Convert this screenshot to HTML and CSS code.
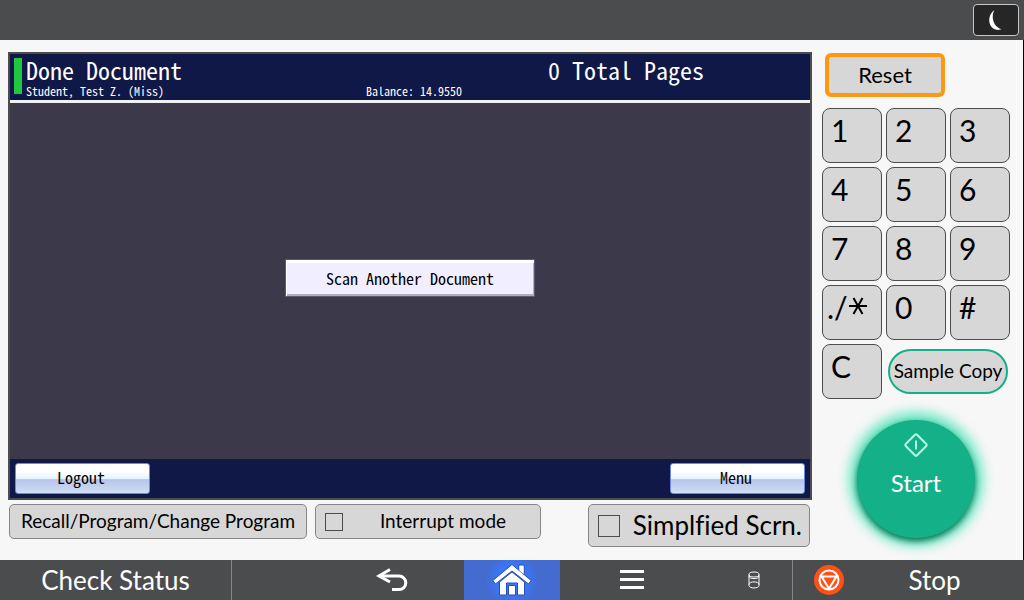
FILE: index.html
```
<!DOCTYPE html>
<html lang="en">
<head>
    <meta charset="UTF-8">
    <meta name="viewport" content="width=device-width, initial-scale=1.0">
    <title>Done Document</title>
    <link rel="stylesheet" href="styles.css">
</head>
<body>
    <header class="topbar">
        <button type="button" class="sleep" aria-label="Sleep">
            <svg width="16" height="24" viewBox="0 0 16 24">
                <path d="M6.500 2C-1.500 7-.5 21.500 10 22l3.500-.8C5.500 19 2.500 9 6.500 2z" fill="#fff"/>
            </svg>
        </button>
    </header>

    <main class="main">
        <div class="left">
            <section class="screen">
                <div class="screen-header">
                    <div class="marker"></div>
                    <div class="info">
                        <h1>Done Document</h1>
                        <p>Student, Test Z. (Miss)</p>
                    </div>
                    <p class="balance">Balance: 14.9550</p>
                    <p class="pages">0 Total Pages</p>
                </div>
                <div class="screen-body">
                    <button type="button" class="scan">Scan Another Document</button>
                </div>
                <div class="screen-footer">
                    <button type="button" class="glossy">Logout</button>
                    <button type="button" class="glossy">Menu</button>
                </div>
            </section>
            <div class="options">
                <button type="button" class="option recall">Recall/Program/Change Program</button>
                <label class="option interrupt"><input type="checkbox"><span>Interrupt mode</span></label>
                <label class="option simple"><input type="checkbox"><span>Simplfied Scrn.</span></label>
            </div>
        </div>

        <aside class="right">
            <button type="button" class="reset">Reset</button>
            <div class="keypad">
                <button type="button">1</button>
                <button type="button">2</button>
                <button type="button">3</button>
                <button type="button">4</button>
                <button type="button">5</button>
                <button type="button">6</button>
                <button type="button">7</button>
                <button type="button">8</button>
                <button type="button">9</button>
                <button type="button" class="star">./<svg width="20" height="20" viewBox="0 0 20 20" aria-label="*">
                    <path d="M1 10h18M5.500 2l9 16M14.500 2l-9 16" stroke="#000" stroke-width="2"/>
                </svg></button>
                <button type="button">0</button>
                <button type="button">#</button>
                <button type="button">C</button>
                <button type="button" class="sample">Sample Copy</button>
            </div>
            <button type="button" class="start">
                <svg width="26" height="26" viewBox="0 0 26 26" fill="none" stroke="#b4fbe6" stroke-width="2">
                    <rect x="5" y="5" width="16" height="16" rx="1.500" transform="rotate(45 13 13)"/>
                    <path d="M13 8.500v9"/>
                </svg>
                <span>Start</span>
            </button>
        </aside>
    </main>

    <nav class="navbar">
        <button type="button" class="status">Check Status</button>
        <button type="button" class="back" aria-label="Back">
            <svg width="34" height="26" viewBox="0 0 34 26" fill="none" stroke="#fff" stroke-width="3">
                <path d="M5 9h19a6.800 6.800 0 0 1 0 13.600H17"/>
                <path d="M15 2.500L4 9l11 6"/>
            </svg>
        </button>
        <button type="button" class="home" aria-label="Home">
            <svg width="40" height="34" viewBox="0 0 40 34" fill="#fff" stroke="#2550b0">
                <path d="M27 2h5v10h-5z"/>
                <path d="M20 1.500L.8 17.500l2.700 3.500L20 8l16.500 13 2.700-3.500z"/>
                <path d="M27.500 3h4v8l-4-3.500z" stroke="none"/>
                <path d="M20 9L7.500 19v13h7v-12h11v12h7V19z"/>
                <path d="M16.500 22.500h7v9.500h-7z"/>
            </svg>
        </button>
        <button type="button" class="menu" aria-label="Menu">
            <svg width="24" height="20" viewBox="0 0 24 20">
                <path d="M0 0h24v3H0zM0 8h24v3H0zM0 16h24v3H0z" fill="#fff"/>
            </svg>
        </button>
        <div class="storage">
            <svg width="12" height="18" viewBox="0 0 12 18" fill="none" stroke="#fff">
                <ellipse cx="6" cy="3.500" rx="5" ry="2.500"/>
                <path d="M1 3.500v11c0 3.300 10 3.300 10 0v-11M1 5c0 3.500 10 3.500 10 0M1 13.500c0-3.500 10-3.500 10 0"/>
            </svg>
        </div>
        <button type="button" class="stop">
            <svg width="32" height="32" viewBox="0 0 32 32" fill="none" stroke="#fff">
                <circle cx="16" cy="16" r="15" fill="#ff5015" stroke="none"/>
                <circle cx="16" cy="16" r="9.500" stroke-width="2"/>
                <path d="M8.500 12.500h15L16 24.500z" stroke-width="2"/>
            </svg>
            <span>Stop</span>
        </button>
    </nav>
</body>
</html>
```
FILE: styles.css
```
* {
    box-sizing: border-box;
}
body {
    margin: 0;
    min-height: 100vh;
    display: flex;
    flex-direction: column;
    font-family: Lato, "Noto Sans", sans-serif;
    font-variant-ligatures: none;
    background-color: #f7f7f7;
    color: #000;
}
h1, p {
    margin: 0;
    font-weight: normal;
}
button {
    font-family: inherit;
    color: inherit;
    padding: 0;
    border: none;
    cursor: pointer;
}
svg {
    display: block;
}

/* top bar */
.topbar {
    display: flex;
    justify-content: flex-end;
    align-items: center;
    height: 40px;
    padding: 0 5px;
    background-color: #4b4c4d;
}
.sleep {
    display: flex;
    align-items: center;
    justify-content: center;
    width: 46px;
    height: 32px;
    background-color: #262626;
    border: 1px solid #c8c8c8;
    border-radius: 4px;
}

/* main area */
.main {
    flex: 1;
    display: flex;
    gap: 10px;
    padding: 12px 13px 12px 8px;
    border-right: 1px solid #000;
}
.left {
    flex: 1;
    display: flex;
    flex-direction: column;
}
.screen {
    flex: 1;
    display: flex;
    flex-direction: column;
    border: 2px solid #4b4c4d;
    background-color: #3c394a;
    color: #fff;
    font-family: "Noto Sans Mono CJK JP", "Noto Sans CJK JP", monospace;
    font-feature-settings: "hwid";
}
.screen-header {
    display: grid;
    grid-template-columns: 8px 336px 1fr 258px;
    column-gap: 4px;
    height: 49px;
    padding: 4px 4px 0;
    background-color: #101848;
    border-bottom: 3px solid #f2f2f2;
}
.marker {
    height: 36px;
    background-color: #20c840;
}
.screen h1, .pages {
    font-size: 24px;
    line-height: 24px;
}
.info p, .balance {
    padding-top: 3px;
    font-size: 12px;
    line-height: 12px;
}
.screen-header .balance {
    padding-top: 27px;
}
.screen-body {
    flex: 1;
    display: flex;
    align-items: center;
    justify-content: center;
    padding-bottom: 6px;
}
.scan {
    width: 250px;
    height: 38px;
    background-color: #f0eeff;
    color: #000;
    border: 1px solid #5c5a70;
    box-shadow: inset 0 3px #fff, inset 1px 0 #fff, inset -1px -2px #b0afb8;
    font-size: 16px;
    font-feature-settings: inherit;
}
.screen-footer {
    display: flex;
    justify-content: space-between;
    align-items: center;
    height: 39px;
    padding: 0 5px;
    background-color: #101848;
}
.glossy {
    width: 135px;
    height: 31px;
    padding: 0 3px 4px 0;
    color: #000;
    border: 1px solid #7088e0;
    border-radius: 3px;
    background: linear-gradient(#fff 0%, #fff 25%, #e4f4ff 50%, #b8c4ea 54%, #c8d8f2 90%, #d4e4fa 100%);
    font-size: 16px;
    font-feature-settings: inherit;
}

/* buttons under the screen */
.options {
    display: flex;
    align-items: flex-start;
    height: 48px;
    gap: 8px;
    padding: 4px 2px 0 1px;
}
.option {
    display: flex;
    align-items: center;
    justify-content: center;
    height: 35px;
    background-color: #d7d7d7;
    border: 1px solid #858585;
    border-radius: 5px;
    font-size: 19px;
    line-height: 32px;
    white-space: nowrap;
    cursor: pointer;
}
.option input {
    appearance: none;
    flex: none;
    width: 18px;
    height: 18px;
    margin: 0;
    border: 1px solid #4b4c4d;
}
.option span {
    flex: 1;
    padding-bottom: 2px;
    text-align: center;
}
.recall {
    width: 298px;
    padding-bottom: 2px;
}
.interrupt {
    width: 226px;
    padding: 0 9px;
}
.interrupt span {
    padding-left: 12px;
}
.simple {
    width: 222px;
    height: 43px;
    margin-left: auto;
    padding: 0 7px 0 9px;
    font-size: 26px;
    line-height: 40px;
}
.simple input {
    width: 22px;
    height: 22px;
}
.simple span {
    text-align: right;
}

/* right column */
.right {
    width: 188px;
    padding-top: 1px;
}
.reset {
    display: block;
    width: 120px;
    height: 44px;
    margin: 0 3px 11px;
    background-color: #d7d7d7;
    border: 4px solid #ff9810;
    border-radius: 6px;
    font-size: 22px;
    line-height: 32px;
}
.keypad {
    display: grid;
    grid-template-columns: repeat(3, 1fr);
    grid-auto-rows: 55px;
    gap: 4px;
}
.keypad button {
    display: flex;
    align-items: flex-start;
    padding: 4px 8px;
    background-color: #d7d7d7;
    border: 1px solid #4b4c4d;
    border-radius: 8px;
    font-size: 30px;
    line-height: 34px;
}
.keypad .star {
    padding-left: 4px;
}
.star svg {
    margin-top: 6px;
}
.keypad .sample {
    grid-column: span 2;
    align-self: center;
    align-items: center;
    justify-content: center;
    height: 45px;
    margin: 0 2px;
    padding: 0 0 2px;
    border: 2px solid #14b088;
    border-radius: 23px;
    font-size: 19px;
    white-space: nowrap;
}
.start {
    display: flex;
    flex-direction: column;
    align-items: center;
    width: 118px;
    height: 118px;
    margin: 21px auto 0;
    padding-top: 12px;
    border-radius: 50%;
    background-color: #14b088;
    box-shadow: 0 3px 6px #087050, 0 0 12px 8px #6ce8c4;
    color: #fff;
    font-size: 24px;
    line-height: 30px;
}
.start span {
    margin-top: 10px;
}

/* bottom bar */
.navbar {
    display: grid;
    grid-template-columns: 29fr 11fr 18fr 12fr 18fr 11fr 29fr;
    height: 40px;
    background-color: #4b4c4d;
    color: #fff;
}
.navbar button {
    display: flex;
    align-items: center;
    justify-content: center;
    background-color: transparent;
}
.navbar .status {
    border-right: 1px solid #858585;
    font-size: 26px;
    line-height: 40px;
}
.back {
    grid-column: 3;
}
.navbar .home {
    background: radial-gradient(circle, #3878ff 0%, #3878ff 25%, #446cd0 50%);
}
.storage {
    display: flex;
    align-items: center;
    justify-content: center;
    padding-left: 12px;
}
.navbar .stop {
    justify-content: flex-start;
    padding: 0 20px;
    border-left: 1px solid #858585;
    font-size: 26px;
    line-height: 40px;
}
.stop span {
    flex: 1;
    padding-left: 20px;
    text-align: center;
}
```
